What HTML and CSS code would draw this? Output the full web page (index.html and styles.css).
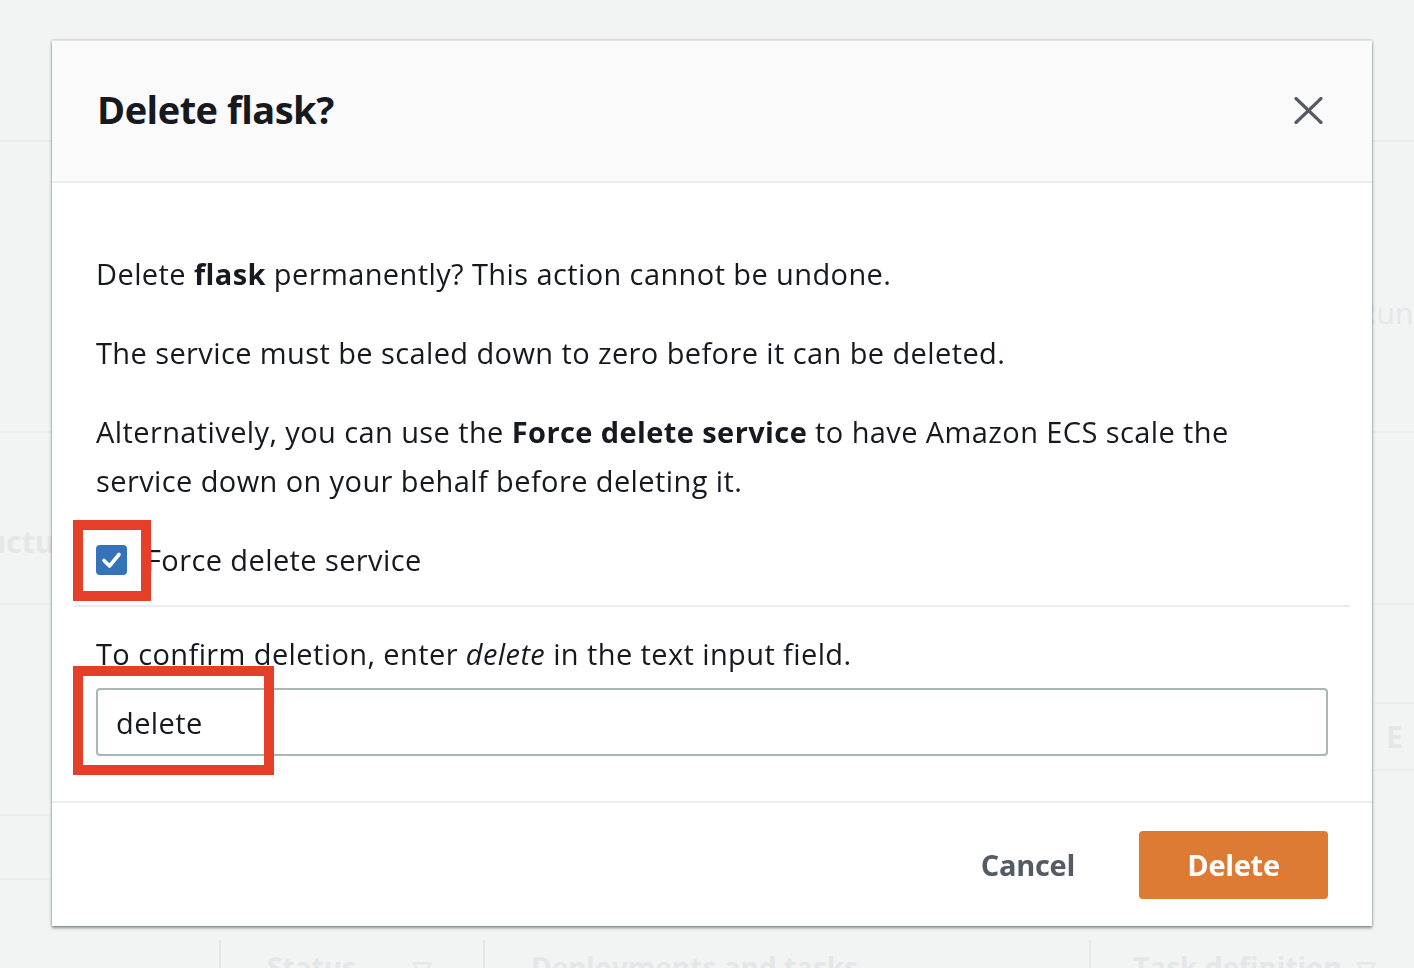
FILE: index.html
```html
<!DOCTYPE html>
<html lang="en">
<head>
<meta charset="utf-8">
<title>Delete flask?</title>
<link rel="stylesheet" href="styles.css">
</head>
<body>
<div class="page">
  <div class="bg-top"></div>
  <div class="bg-summary">
    <div class="bg-stat">
      <div class="bg-stat-label">Running</div>
      <div class="bg-stat-value">1</div>
    </div>
  </div>
  <div class="bg-tabs">
    <span class="bg-tab bg-tab-first">Infrastructure</span>
    <span class="bg-tab">Metrics</span>
    <span class="bg-tab">Tags</span>
  </div>
  <div class="bg-lower">
    <div class="bg-lower-left">
      <div class="bg-cell bg-cell-l1"></div>
      <div class="bg-cell bg-cell-l2"></div>
    </div>
    <div class="bg-lower-right">
      <div class="bg-cell bg-cell-r1"></div>
      <div class="bg-cell bg-cell-r2"><span class="bg-e">E</span></div>
    </div>
  </div>
  <div class="bg-table-head">
    <div class="bg-th bg-th-blank"></div>
    <div class="bg-th bg-th-status">Status <span class="bg-filter">▽</span></div>
    <div class="bg-th bg-th-deploy">Deployments and tasks</div>
    <div class="bg-th bg-th-task">Task definition <span class="bg-filter">▽</span></div>
  </div>
</div>

<div class="modal" role="dialog" aria-labelledby="modal-title">
  <div class="modal-header">
    <h2 class="modal-title" id="modal-title">Delete flask?</h2>
    <button class="close-btn" aria-label="Close">
      <svg width="29" height="27" viewBox="0 0 29 27"><path d="M2 1.5 L27 25.5 M27 1.5 L2 25.5" stroke="#545b64" stroke-width="3.2" stroke-linecap="round" fill="none"/></svg>
    </button>
  </div>
  <div class="modal-body">
    <p class="para">Delete <b>flask</b> permanently? This action cannot be undone.</p>
    <p class="para">The service must be scaled down to zero before it can be deleted.</p>
    <p class="para">Alternatively, you can use the <b>Force delete service</b> to have Amazon ECS scale the service down on your behalf before deleting it.</p>
    <label class="check-row">
      <span class="checkbox">
        <svg width="31" height="30" viewBox="0 0 31 30"><path d="M8 15.5 L13.5 21 L23 9.5" stroke="#fff" stroke-width="3.6" stroke-linecap="round" stroke-linejoin="round" fill="none"/></svg>
      </span>
      <span class="check-label">Force delete service</span>
      <span class="annot annot-check"></span>
    </label>
    <div class="divider"></div>
    <p class="confirm-label">To confirm deletion, enter <i>delete</i> in the text input field.</p>
    <div class="input-wrap">
      <div class="text-input">delete</div>
      <span class="annot annot-input"></span>
    </div>
  </div>
  <div class="modal-footer">
    <button class="btn btn-link">Cancel</button>
    <button class="btn btn-primary">Delete</button>
  </div>
</div>
</body>
</html>
```

FILE: styles.css
```css
html, body {
  margin: 0;
  padding: 0;
}
body {
  width: 1414px;
  height: 968px;
  overflow: hidden;
  background: #f2f3f3;
  font-family: "Open Sans", "Noto Sans", sans-serif;
  color: #16191f;
}

/* ---------- faint background page ---------- */
.page {
  color: #e4e7e7;
}
.bg-top {
  height: 140px;
  border-bottom: 2px solid #eaeded;
}
.bg-summary {
  height: 289px;
  border-bottom: 2px solid #eaeded;
  display: flex;
  justify-content: flex-end;
}
.bg-stat {
  width: 56px;
  padding-top: 150px;
  overflow: hidden;
  white-space: nowrap;
  font-size: 30px;
}
.bg-stat-value {
  font-size: 28px;
  margin-top: 4px;
}
.bg-tabs {
  height: 172px;
  box-sizing: border-box;
  padding-top: 88px;
  border-bottom: 2px solid #eaeded;
  display: flex;
  align-items: flex-start;
  gap: 60px;
  font-size: 30px;
  font-weight: 700;
  white-space: nowrap;
  overflow: hidden;
}
.bg-tab-first {
  margin-left: -128px;
}
.bg-lower {
  display: flex;
  justify-content: space-between;
}
.bg-lower-left, .bg-lower-right {
  width: 60px;
}
.bg-cell-l1 {
  height: 209px;
  border-bottom: 2px solid #eaeded;
}
.bg-cell-l2 {
  height: 62px;
  border-bottom: 2px solid #eaeded;
}
.bg-cell-r1 {
  height: 97px;
  border-bottom: 2px solid #eaeded;
}
.bg-cell-r2 {
  height: 65px;
  border-bottom: 2px solid #eaeded;
  border-left: 2px solid #eaeded;
  margin-left: -16px;
  display: flex;
  align-items: center;
  padding-left: 46px;
  font-size: 30px;
  font-weight: 700;
  overflow: hidden;
}
.bg-table-head {
  margin-top: 60px;
  display: flex;
  height: 40px;
  font-size: 28px;
  font-weight: 700;
  white-space: nowrap;
}
.bg-th {
  border-left: 2px solid #e6e9e9;
  padding: 8px 0 0 46px;
  box-sizing: border-box;
}
.bg-th-blank {
  width: 219px;
  border-left: none;
}
.bg-th-status { width: 264px; }
.bg-th-deploy { width: 606px; }
.bg-th-task { width: 325px; padding-left: 42px; }
.bg-filter {
  margin-left: 50px;
  font-size: 24px;
}
.bg-th-task .bg-filter { margin-left: 8px; }

/* ---------- modal ---------- */
.modal {
  position: fixed;
  left: 52px;
  top: 40px;
  width: 1320px;
  height: 886px;
  background: #fff;
  border-top: 1px solid #e3e6e6;
  box-sizing: border-box;
  box-shadow: 0 2px 3px rgba(0, 28, 36, 0.45), 0 0 2px rgba(0, 28, 36, 0.25);
  display: flex;
  flex-direction: column;
}
.modal-header {
  height: 142px;
  box-sizing: border-box;
  padding: 0 49px 5px 45px;
  background: #fafafa;
  border-bottom: 2px solid #eaeded;
  display: flex;
  align-items: center;
  justify-content: space-between;
  flex: none;
}
.modal-title {
  margin: 0;
  font-size: 38px;
  font-weight: 700;
  letter-spacing: -0.5px;
  color: #16191f;
}
.close-btn {
  border: 0;
  background: none;
  padding: 0;
  margin-top: 3px;
  width: 29px;
  height: 27px;
  display: block;
  cursor: pointer;
}
.close-btn svg { display: block; }

.modal-body {
  padding: 66px 44px 45px 44px;
  font-size: 29px;
  letter-spacing: 0.4px;
  line-height: 49px;
  flex: none;
}
.para {
  margin: 0 0 30px 0;
}
.para b { font-weight: 700; }

.check-row {
  position: relative;
  display: flex;
  align-items: center;
  height: 49px;
}
.checkbox {
  width: 31px;
  height: 30px;
  background: #3573b9;
  border-radius: 4px;
  flex: none;
}
.checkbox svg { display: block; }
.check-label {
  margin-left: 19px;
}
.annot {
  position: absolute;
  border: 10px solid #e63f29;
  box-sizing: border-box;
  pointer-events: none;
}
.annot-check {
  left: -23px;
  top: -15px;
  width: 78px;
  height: 81px;
}
.divider {
  height: 2px;
  background: #eaeded;
  margin: 21px -22px 22px -22px;
}
.confirm-label {
  margin: 0 0 10px 0;
}
.input-wrap {
  position: relative;
}
.text-input {
  height: 68px;
  box-sizing: border-box;
  border: 2px solid #aab7b8;
  border-radius: 4px;
  padding: 0 18px;
  display: flex;
  align-items: center;
  font-size: 29px;
}
.annot-input {
  left: -23px;
  top: -22px;
  width: 201px;
  height: 109px;
}

.modal-footer {
  border-top: 2px solid #eaeded;
  flex: 1;
  display: flex;
  align-items: center;
  justify-content: flex-end;
  padding: 0 44px;
  gap: 24px;
}
.btn {
  font-family: inherit;
  font-size: 29px;
  font-weight: 700;
  border: 0;
  border-radius: 4px;
  height: 68px;
  cursor: pointer;
  letter-spacing: -0.3px;
}
.btn-link {
  background: none;
  color: #545b64;
  padding: 0 40px;
}
.btn-primary {
  background: #dd7b34;
  color: #fff;
  width: 189px;
  padding: 0;
}
```
